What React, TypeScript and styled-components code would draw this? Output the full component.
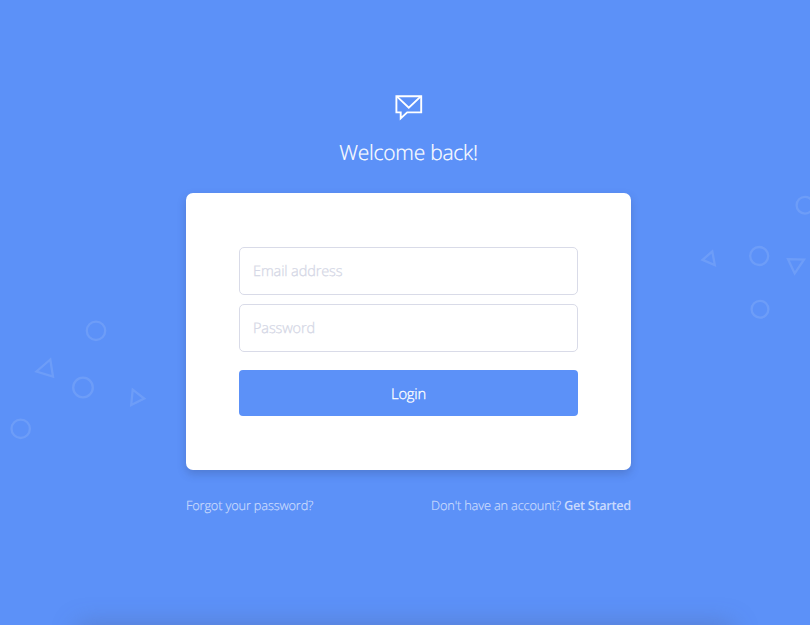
import React from "react";
import styled, { createGlobalStyle } from "styled-components";

const GlobalStyle = createGlobalStyle`
  *, *::before, *::after { box-sizing: border-box; }
  body {
    margin: 0;
    background: #5c91f8;
    font-family: "Open Sans", sans-serif;
    font-weight: 300;
    text-rendering: geometricPrecision;
  }
`;

const Page = styled.main`
  position: relative;
  display: flex;
  flex-direction: column;
  align-items: center;
  height: 625px;
  padding: 94px 179px 0 186px;
  overflow: hidden;
  background: #5c91f8;
`;

const Backdrop = styled.svg`
  position: absolute;
  inset: 0;
  pointer-events: none;
`;

const BottomShade = styled.div`
  position: absolute;
  left: 80px;
  right: 80px;
  top: 627px;
  height: 60px;
  box-shadow: 0 0 26px 2px rgba(80, 90, 130, 0.36);
`;

const Logo = styled.svg`
  display: block;
  width: 28px;
  height: 27px;
  overflow: visible;
`;

const Title = styled.h1`
  margin: 17px 0 25px;
  color: #fff;
  font-size: 21px;
  font-weight: 300;
  line-height: 30px;
  letter-spacing: -0.25px;
  -webkit-text-stroke: 0.2px currentColor;
  white-space: nowrap;
`;

const Card = styled.form`
  position: relative;
  display: flex;
  flex-direction: column;
  width: 445px;
  height: 277px;
  padding: 54px 53px 53px;
  border-radius: 7px;
  background: #fff;
  box-shadow: 0 4px 9px rgba(50, 70, 120, 0.28);
`;

const Field = styled.input`
  width: 100%;
  height: 48px;
  margin: 0 0 9px;
  padding: 1px 13px 0;
  border: 1px solid #d9dbe8;
  border-radius: 5px;
  outline: 0;
  background: #fff;
  color: #555b70;
  font: 300 14.5px "Open Sans", sans-serif;
  letter-spacing: -0.12px;
  text-rendering: geometricPrecision;
  -webkit-text-stroke: 0.25px #d3d6e5;

  &::placeholder {
    color: #d3d6e5;
    opacity: 1;
  }
`;

const LoginButton = styled.button`
  height: 46px;
  margin-top: 9px;
  padding: 1px 0 0;
  border: 0;
  border-radius: 4px;
  background: #5c91f8;
  color: #fff;
  font: 300 14.75px "Open Sans", sans-serif;
  letter-spacing: -0.2px;
  text-rendering: geometricPrecision;
  -webkit-text-stroke: 0.3px currentColor;
`;

const Links = styled.nav`
  display: flex;
  justify-content: space-between;
  width: 445px;
  margin-top: 25px;
  font-size: 12.75px;
  letter-spacing: -0.15px;
  line-height: 20px;
  white-space: nowrap;
`;

const TextLink = styled.a`
  color: #c9dafd;
  text-decoration: none;
  -webkit-text-stroke: 0.2px currentColor;
`;

const Strong = styled.span`
  font-weight: 600;
  letter-spacing: -0.3px;
  -webkit-text-stroke: 0;
`;

const circles = [
  { x: 96, y: 330.8, r: 9.2 },
  { x: 83, y: 387.5, r: 9.8 },
  { x: 20.7, y: 428.8, r: 9.2 },
  { x: 805, y: 205.2, r: 8.4 },
  { x: 759.2, y: 256, r: 9 },
  { x: 760, y: 309.2, r: 8.4 },
];

const triangles = [
  "50.3,359.5 36.5,371.5 53,376.5",
  "132.7,389.7 144.2,398.5 131.2,405",
  "712.3,251.5 702.5,259.8 714.8,265",
  "788,259.2 804,259.7 794.7,273.5",
];

export default function App() {
  return (
    <Page>
      <GlobalStyle />
      <Backdrop width="810" height="625" fill="none" stroke="#fff" strokeOpacity="0.11" strokeWidth="2.3" aria-hidden="true">
        {circles.map((c) => (
          <circle key={`${c.x}-${c.y}`} cx={c.x} cy={c.y} r={c.r} />
        ))}
        {triangles.map((points) => (
          <polygon key={points} points={points} />
        ))}
      </Backdrop>
      <BottomShade />
      <Logo viewBox="0 0 28 27" fill="none" stroke="#fff" strokeWidth="1.9" aria-hidden="true">
        <path d="M1.4 2.2H26.2V18.4H12.2L5.7 24.4V18.4H1.4Z" />
        <path d="M1.8 2.4L13.8 13.6L25.8 2.4" />
      </Logo>
      <Title>Welcome back!</Title>
      <Card onSubmit={(e) => e.preventDefault()}>
        <Field type="email" placeholder="Email address" />
        <Field type="password" placeholder="Password" />
        <LoginButton type="submit">Login</LoginButton>
      </Card>
      <Links>
        <TextLink>Forgot your password?</TextLink>
        <TextLink>
          Don't have an account? <Strong>Get Started</Strong>
        </TextLink>
      </Links>
    </Page>
  );
}
